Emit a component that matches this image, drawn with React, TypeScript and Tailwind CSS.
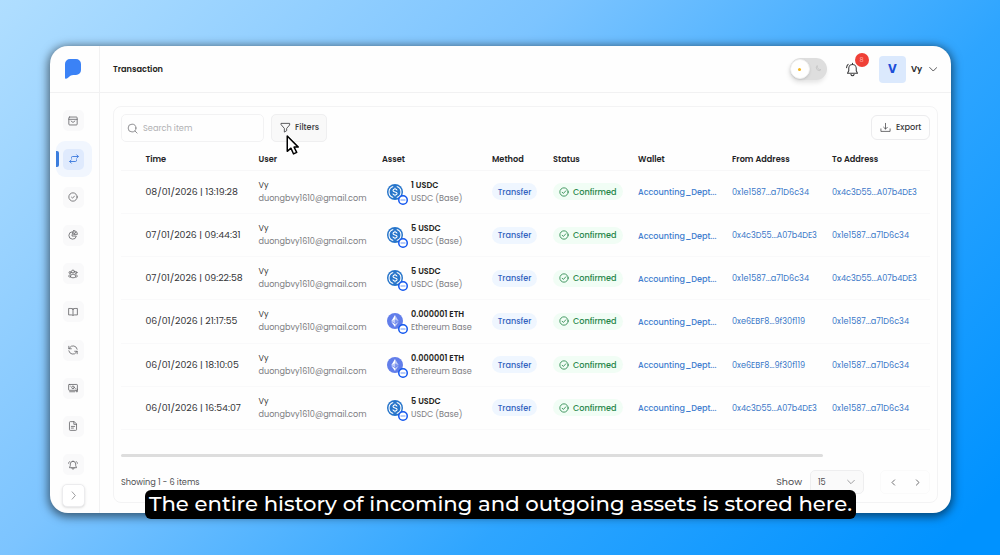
import type { ReactNode } from "react";

type Tx = {
  time: string;
  amount: string;
  asset: string;
  eth?: boolean;
  from: string;
  to: string;
};

const A = "0x1e1587...a71D6c34";
const B = "0x4c3D55...A07b4DE3";
const C = "0xe6EBF8...9f30f119";

const rows: Tx[] = [
  { time: "08/01/2026 | 13:19:28", amount: "1 USDC", asset: "USDC (Base)", from: A, to: B },
  { time: "07/01/2026 | 09:44:31", amount: "5 USDC", asset: "USDC (Base)", from: B, to: A },
  { time: "07/01/2026 | 09:22:58", amount: "5 USDC", asset: "USDC (Base)", from: A, to: B },
  { time: "06/01/2026 | 21:17:55", amount: "0.000001 ETH", asset: "Ethereum Base", eth: true, from: C, to: A },
  { time: "06/01/2026 | 18:10:05", amount: "0.000001 ETH", asset: "Ethereum Base", eth: true, from: C, to: A },
  { time: "06/01/2026 | 16:54:07", amount: "5 USDC", asset: "USDC (Base)", from: B, to: A },
];

const gridCols = "grid grid-cols-[113px_123.500px_110px_61px_85px_94px_100px_1fr] pl-[24.500px]";

function Svg({ children, className = "size-[11px]", sw = 1.8 }: { children: ReactNode; className?: string; sw?: number }) {
  return (
    <svg viewBox="0 0 24 24" className={`shrink-0 ${className}`} fill="none" stroke="currentColor" strokeWidth={sw} strokeLinecap="round" strokeLinejoin="round">
      {children}
    </svg>
  );
}

const navIcons: ReactNode[] = [
  <>
    <rect x="2" y="2.500" width="20" height="19" rx="2" />
    <path d="M2 8h20M7.500 12l4.500 3.500 4.500-3.500" />
  </>,
  <>
    <path d="M6 10V8.500A2.500 2.500 0 0 1 8.500 6H22M18.500 2l4 4-4 4" />
    <path d="M18 14v1.500a2.500 2.500 0 0 1-2.500 2.500H2M5.500 14l-4 4 4 4" />
  </>,
  <>
    <circle cx="12" cy="12" r="10" />
    <path d="m8.500 12.500 2.500 2.300 4.500-5" />
  </>,
  <>
    <path d="M10.500 4a9 9 0 1 0 9.500 10.500h-9.500z" />
    <path d="M14 1.500v9h8.500A8.500 8.500 0 0 0 14 1.500zM14 10.500l5.500-6" />
  </>,
  <>
    <circle cx="12" cy="6" r="3.500" />
    <circle cx="5" cy="8.500" r="2.500" />
    <circle cx="19" cy="8.500" r="2.500" />
    <path d="M6 18c0-3.500 2.500-5.500 6-5.500s6 2 6 5.500c0 2-2.500 3-6 3s-6-1-6-3zM6 14c-2.500 0-4.500 1.200-4.500 3s2 2.500 4.500 2.500M18 14c2.500 0 4.500 1.200 4.500 3s-2 2.500-4.500 2.500" />
  </>,
  <path d="M12 5C10.500 4 9 3.500 7 3.500H1.500V19H8c2 0 3 .5 4 1.500 1-1 2-1.500 4-1.500h6.500V3.500H17c-2 0-3.500.5-5 1.500zm0 0v15" />,
  <>
    <path d="M22 10a10 10 0 0 0-18-3.500L2 9M2 3v6h6" />
    <path d="M2 14a10 10 0 0 0 18 3.500l2-2.500M22 21v-6h-6" />
  </>,
  <>
    <rect x="1.500" y="3.500" width="21" height="14" rx="1.500" />
    <circle cx="12" cy="10.500" r="3.200" />
    <path d="M5.500 7.500v.1M18.500 13.500v.1M4 21h12M19.500 17.500V21h3v-6" />
  </>,
  <>
    <path d="M14 1.500H5.500A2 2 0 0 0 3.500 3.500v17a2 2 0 0 0 2 2h13a2 2 0 0 0 2-2V8zM14 1.500V8h6.500" />
    <path d="M8 13h8M8 17h5" />
  </>,
  <>
    <path d="M12 3a6.500 6.500 0 0 0-6.500 6.500v4L3.500 18.500h17l-2-5v-4A6.500 6.500 0 0 0 12 3z" />
    <path d="M9 19a3 3 0 0 0 6 0M1.500 8c.2-2 1-3.500 2.500-4.500M22.500 8c-.2-2-1-3.500-2.500-4.500" />
  </>,
];

function Sidebar() {
  return (
    <aside className="flex w-[50px] shrink-0 flex-col border-r border-[#f1f1f2]">
      <div className="flex h-[47px] shrink-0 items-center border-b border-[#f1f1f2] pl-[15px]">
        <svg viewBox="0 0 16 20" className="h-5 w-4">
          <path d="M5 0h6a5 5 0 0 1 5 5v6a5 5 0 0 1-5 5H8.500C6 16 4.500 17.300 3 18.800 1.800 20 0 20.400 0 18.800V5a5 5 0 0 1 5-5z" fill="#3b82f6" />
        </svg>
      </div>
      <nav className="flex shrink-0 flex-col pt-[8.800px]">
        {navIcons.map((icon, i) => (
          <div key={i} className="flex h-[38.200px] items-center">
            {i === 1 ? (
              <div className="relative ml-1.5 flex size-[35.500px] items-center justify-center rounded-[9px] bg-[#f1f6fe]">
                <span className="absolute left-0 top-[10px] h-4 w-[2.500px] rounded-r-[2px] bg-[#3b7ddd]" />
                <span className="flex size-[21px] items-center justify-center rounded-[5px] bg-[#dfeafd] text-[#3b78dd]">
                  <Svg className="size-[10px]" sw={2.2}>{icon}</Svg>
                </span>
              </div>
            ) : (
              <span className="ml-[12.500px] flex size-[21px] items-center justify-center rounded-[5px] bg-[#f9f9fa] text-[#68686b]">
                <Svg className="size-[10px]" sw={2}>{icon}</Svg>
              </span>
            )}
          </div>
        ))}
      </nav>
      <div className="ml-3 flex size-[23px] shrink-0 items-center justify-center rounded-[5px] border border-[#ececee] bg-white text-[#8a8a8d] shadow-sm">
        <Svg className="size-[11px]"><path d="m9 4 7 8-7 8" /></Svg>
      </div>
    </aside>
  );
}

function Header() {
  return (
    <header className="flex h-[47px] shrink-0 items-center border-b border-[#f1f1f2] pl-[13px] pr-3.5">
      <h1 className="text-[8.200px] font-semibold text-[#1f1f21]">Transaction</h1>
      <div className="ml-auto flex items-center">
        <div className="flex h-[22px] w-[37px] items-center rounded-full bg-[#dedede] shadow-[-1px_3px_4px_#00000018]">
          <span className="flex size-5 items-center justify-center rounded-full border border-[#f0f0f0] bg-white shadow-sm">
            <span className="size-[3px] rounded-full bg-[#f3b51f]" />
          </span>
          <Svg className="ml-1 size-2 text-[#bfbfbf]" sw={2}><path d="M9 3a8 8 0 1 0 12 11A10 10 0 0 1 9 3z" /></Svg>
        </div>
        <div className="relative ml-[18px] text-[#3c3c3e]">
          <Svg className="size-[15px]" sw={1.7}>
            <path d="M12 4a6 6 0 0 0-6 6v4l-2 4h16l-2-4v-4a6 6 0 0 0-6-6zM12 2v2M9.500 20a2.600 2.600 0 0 0 5 0M2.500 9c.2-2.500 1-4 2.500-5.200" />
          </Svg>
          <span className="absolute -top-[9px] left-[10px] flex size-3.5 items-center justify-center rounded-full bg-[#ef4037] text-[6.500px] text-[#ffb0aa]">8</span>
        </div>
        <div className="ml-[19.500px] flex size-[27px] items-center justify-center rounded-[4px] bg-[#dbe9fd] text-[12px] font-bold text-[#1d4ed8]">V</div>
        <span className="ml-[5px] w-[17.500px] text-[8.600px] font-semibold text-[#2b2b2d]">Vy</span>
        <Svg className="size-[8.500px] text-[#444446]" sw={2.5}><path d="m2 7 10 10L22 7" /></Svg>
      </div>
    </header>
  );
}

function Coin({ eth }: { eth?: boolean }) {
  return (
    <div className="relative ml-[5px] size-4 shrink-0">
      {eth ? (
        <svg viewBox="0 0 32 32" className="size-4">
          <circle cx="16" cy="16" r="16" fill="#627eea" />
          <path d="M16 4v9l7.500 3.300z" fill="#fff" opacity=".6" />
          <path d="M16 4 8.500 16.300 16 13z" fill="#fff" />
          <path d="M16 21.800V28l7.500-10.300z" fill="#fff" opacity=".6" />
          <path d="M16 28v-6.200l-7.500-4.100z" fill="#fff" />
          <path d="m16 20.500 7.500-4.200L16 13z" fill="#fff" opacity=".2" />
          <path d="m8.500 16.300 7.500 4.200V13z" fill="#fff" opacity=".6" />
        </svg>
      ) : (
        <svg viewBox="0 0 32 32" className="size-4" fill="none" stroke="#fff" strokeWidth="2.200">
          <circle cx="16" cy="16" r="16" fill="#2775ca" stroke="none" />
          <path d="M12.500 5a11.400 11.400 0 0 0 0 22M19.500 5a11.400 11.400 0 0 1 0 22" />
          <path d="M20 13c0-2-1.800-3-4-3s-4 1-4 2.900c0 4.200 8.200 2 8.200 6.200 0 2-1.900 3-4.200 3s-4.200-1-4.200-3.100M16 7.500V10M16 22v2.500" />
        </svg>
      )}
      <svg viewBox="0 0 20 20" className="absolute left-[11px] top-[11px] size-[10px]">
        <circle cx="10" cy="10" r="8.500" fill="#fff" stroke="#1256ee" strokeWidth="3" />
        <path d="M5 10h10" stroke="#6f9af6" strokeWidth="2" />
      </svg>
    </div>
  );
}

function Row({ tx }: { tx: Tx }) {
  return (
    <div className={`${gridCols} h-[43.170px] shrink-0 items-center border-b border-[#f9f9fa] text-[8.100px]`}>
      <span className="whitespace-nowrap text-[9.350px] text-[#333336]">{tx.time}</span>
      <div className="flex flex-col leading-[13px]">
        <span className="text-[#3f3f42]">Vy</span>
        <span className="text-[#7b7b7e]">duongbvy1610@gmail.com</span>
      </div>
      <div className="flex items-center">
        <Coin eth={tx.eth} />
        <div className="ml-2 flex flex-col whitespace-nowrap leading-[13px]">
          <span className="font-semibold text-[#1f1f21]">{tx.amount}</span>
          <span className="text-[#7b7b7e]">{tx.asset}</span>
        </div>
      </div>
      <span className="flex h-[17px] w-[45px] items-center justify-center rounded-full bg-[#eff6ff] font-medium text-[#3263c0]">Transfer</span>
      <span className="flex h-[17px] w-[70px] items-center rounded-full bg-[#f1fdf5] pl-1.5 font-medium text-[#258548]">
        <Svg className="mr-1 size-[10px]" sw={2}><circle cx="12" cy="12" r="10" /><path d="m7.500 12.500 3 3 6-6.500" /></Svg>
        Confirmed
      </span>
      <span className="whitespace-nowrap pt-px font-medium text-[#3f7dcf]">Accounting_Dept...</span>
      <span className="whitespace-nowrap text-[#3a78c8]">{tx.from}</span>
      <span className="whitespace-nowrap text-[#3a78c8]">{tx.to}</span>
    </div>
  );
}

function TransactionCard() {
  return (
    <section className="mx-[13px] mt-[13px] flex h-[397px] flex-col rounded-[8px] border border-[#f3f3f4] px-[7px] pt-[6.500px]">
      <div className="flex h-7 shrink-0 items-center text-[8.200px]">
        <div className="flex h-7 w-[143px] items-center rounded-[5px] border border-[#f2f2f3] pl-[5px] pt-px text-[#b0b0b3]">
          <Svg className="mr-[5px] size-[11px] text-[#7b7b7e]"><circle cx="11" cy="11" r="8.500" /><path d="m17.500 17.500 4.500 4.500" /></Svg>
          Search item
        </div>
        <div className="relative ml-[7px] flex h-7 w-14 items-center rounded-[5px] border border-[#efeff0] bg-[#f9f9f9] pl-2 font-medium text-[#3c3c3f]">
          <Svg className="mr-1 size-[11px]"><path d="M3 3h18v3.500l-6.500 7.500v5L9.500 22v-8L3 6.500z" /></Svg>
          Filters
          <svg viewBox="0 0 24 38" className="absolute left-[14px] top-[20px] z-10 h-[20px] w-[13px]">
            <path d="M2 2v29l7-6 5 11 6-3-5-10h8z" fill="#fff" stroke="#000" strokeWidth="2.800" strokeLinejoin="round" />
          </svg>
        </div>
        <div className="ml-auto flex h-[25px] w-[59px] items-center rounded-[6px] border border-[#ececee] pl-2 font-medium text-[#3c3c3f]">
          <Svg className="mr-[5px] size-[11px]" sw={1.6}><path d="M2 15v5.500h20V15M12 3v12M8 11.500l4 4 4-4" /></Svg>
          Export
        </div>
      </div>
      <div className={`${gridCols} h-[29px] shrink-0 items-center border-b border-[#f7f7f8] pt-[8px] text-[8.200px] font-semibold text-[#242426]`}>
        <span>Time</span>
        <span>User</span>
        <span>Asset</span>
        <span>Method</span>
        <span>Status</span>
        <span>Wallet</span>
        <span>From Address</span>
        <span>To Address</span>
      </div>
      <div className="flex shrink-0 flex-col pt-[0.400px]">
        {rows.map((tx) => (
          <Row key={tx.time} tx={tx} />
        ))}
      </div>
      <div className="mt-[24px] h-[3px] w-[702px] shrink-0 rounded-full bg-[#dddddd]" />
      <div className="mt-[13.500px] flex h-6 shrink-0 items-center text-[8.200px] text-[#4f4f52]">
        <span>Showing 1 - 6 items</span>
        <span className="ml-auto mr-2 text-[9.600px]">Show</span>
        <div className="flex h-6 w-[54px] items-center justify-between rounded-[5px] border border-[#eeeeef] bg-[#fafafa] pl-[7px] pr-2">
          <span>15</span>
          <Svg className="size-[8px] text-[#8a8a8d]" sw={2.500}><path d="m2 7 10 10L22 7" /></Svg>
        </div>
        <div className="ml-4 flex h-6 w-[50px] items-center justify-around rounded-[5px] border border-[#fafafa] text-[#66666a]">
          <Svg className="size-[9px]" sw={2.500}><path d="m15 5-7 7 7 7" /></Svg>
          <Svg className="size-[9px]" sw={2.500}><path d="m9 5 7 7-7 7" /></Svg>
        </div>
      </div>
    </section>
  );
}

export default function App() {
  return (
    <div className="relative h-[555px] w-[1000px] overflow-hidden bg-[linear-gradient(135deg,#b0deff_0%,#7cc4ff_36%,#2ea5ff_66%,#0092ff_96%)] pl-[50px] pt-[46px] font-['Poppins','Inter',sans-serif]">
      <div className="flex h-[467px] w-[901px] overflow-hidden rounded-[18px] bg-[#fefefe] shadow-[0_2px_10px_2px_#00000088]">
        <Sidebar />
        <main className="flex min-w-0 flex-1 flex-col">
          <Header />
          <TransactionCard />
        </main>
      </div>
      <div className="absolute left-[145px] top-[489.500px] flex h-[29px] w-[711px] items-center justify-center whitespace-nowrap rounded-[6px] bg-black pb-px font-['Montserrat','Noto_Sans',sans-serif] text-[21.200px] font-medium text-white">
        The entire history of incoming and outgoing assets is stored here.
      </div>
    </div>
  );
}
